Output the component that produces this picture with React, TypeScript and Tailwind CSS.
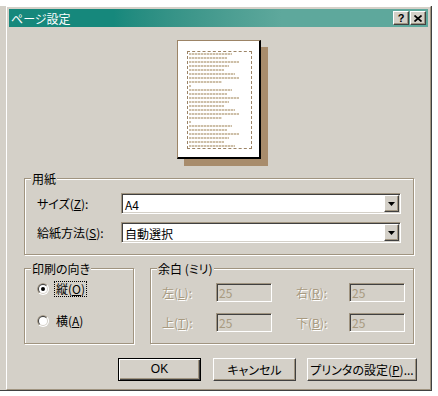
import React from "react";

// classic 3D edges, tan shadow colour of the scheme
const raised =
  "border border-t-white border-l-white border-r-[#404040] border-b-[#404040] shadow-[inset_-1px_-1px_0_#a09480]";
const sunken =
  "border border-t-[#a09480] border-l-[#a09480] border-r-white border-b-white shadow-[inset_1px_1px_0_#404040,inset_-1px_-1px_0_#d4d0c8]";
const disabledText = "text-[#a89a80] [text-shadow:1px_1px_0_#ffffff]";

const previewLines = [43, 38, 50, 40, 35, 46, 50, 33, 2, 43, 38, 50, 40, 35, 46, 50, 33, 2, 43, 38, 50, 40, 35, 46];

const GroupBox = ({
  label,
  className,
  children,
}: {
  label: string;
  className?: string;
  children?: React.ReactNode;
}) => (
  <div className={`relative border border-[#a09480] shadow-[inset_1px_1px_0_#ffffff,1px_1px_0_#ffffff] ${className}`}>
    <span className="absolute -top-[8px] left-[6px] bg-[#d4d0c8] px-[1px] text-[12px] leading-[15px] [font-feature-settings:'palt']">
      {label}
    </span>
    {children}
  </div>
);

const Radio = ({ checked }: { checked?: boolean }) => (
  <svg width="12" height="12" viewBox="0 0 12 12">
    <defs>
      <clipPath id="tl">
        <polygon points="0,0 12,0 0,12" />
      </clipPath>
    </defs>
    <circle cx="6" cy="6" r="6" fill="#ffffff" />
    <circle cx="6" cy="6" r="6" fill="#a09480" clipPath="url(#tl)" />
    <circle cx="6" cy="6" r="5" fill="#d4d0c8" />
    <circle cx="6" cy="6" r="5" fill="#404040" clipPath="url(#tl)" />
    <circle cx="6" cy="6" r="4" fill="#ffffff" />
    {checked && <circle cx="6" cy="6" r="2" fill="#000000" />}
  </svg>
);

const Combo = ({ value }: { value: string }) => (
  <div className={`flex h-[21px] w-[280px] bg-white ${sunken}`}>
    <div className="flex flex-1 items-center pl-[3px] pt-[1px] text-[12px] leading-[15px]">{value}</div>
    <div className={`mt-[1px] mr-[1px] flex h-[17px] w-[15px] items-center justify-center bg-[#d4d0c8] ${raised}`}>
      <svg width="7" height="4" viewBox="0 0 7 4">
        <polygon points="0,0 7,0 3.5,4" fill="#000" />
      </svg>
    </div>
  </div>
);

const MarginField = ({ label, mnemonic, gap }: { label: string; mnemonic: string; gap?: boolean }) => (
  <>
    <div className={`${gap ? "ml-[24px] w-[53px]" : "w-[54px]"} text-[12px] leading-[15px] ${disabledText}`}>
      {label}(<span className="underline">{mnemonic}</span>):
    </div>
    <div className={`flex h-[19px] w-[56px] items-center bg-[#d4d0c8] pl-[2px] text-[12px] leading-[15px] ${sunken}`}>
      <span className="text-[#a89a80]">25</span>
    </div>
  </>
);

export default function App() {
  return (
    <div className="h-[396px] w-[438px] bg-white font-['Noto_Sans_CJK_JP',sans-serif] text-black">
      <div className="mt-[6px] h-[385px] w-[432px] border-r border-b border-[#404040] bg-[#d4d0c8] pl-[6px]">
        <div className="h-full border border-t-white border-l-white border-r-[#a09480] border-b-[#a09480] p-[2px]">
          {/* title bar */}
          <div className="flex h-[18px] items-center bg-linear-to-r from-[#16887c] from-25% to-[#5ea89c] to-65% pl-[2px] pr-[2px]">
            <span className="flex-1 text-[12px] leading-[15px] text-white [font-feature-settings:'palt']">ページ設定</span>
            <div className={`flex h-[14px] w-[16px] items-center justify-center bg-[#d4d0c8] ${raised}`}>
              <span className="font-['Liberation_Sans',sans-serif] text-[11px] font-bold leading-[11px]">?</span>
            </div>
            <div className={`ml-[1px] flex h-[14px] w-[16px] items-center justify-center bg-[#d4d0c8] ${raised}`}>
              <svg width="8" height="7" viewBox="0 0 8 7">
                <path d="M0.5 0.5 L7.5 6.5 M7.5 0.5 L0.5 6.5" stroke="#000" strokeWidth="1.7" />
              </svg>
            </div>
          </div>

          {/* page preview */}
          <div className="ml-[168px] mt-[13px] h-[119px] w-[84px] border-t border-l border-[#9c8466] border-r-2 border-b-2 border-r-black border-b-black bg-white shadow-[7px_7px_0_#a88c6c]">
            <div className="ml-[9px] mt-[10px] h-[98px] w-[65px] border border-dashed border-[#9c8466] pl-[1px] pt-[1px]">
              {previewLines.map((w, i) => (
                <div
                  key={i}
                  className="mb-[2px] h-[2px] bg-[repeating-linear-gradient(90deg,#cdbfa8_0px,#cdbfa8_2px,#ebe4d8_2px,#ebe4d8_3px)]"
                  style={{ width: w }}
                />
              ))}
            </div>
          </div>

          {/* paper */}
          <GroupBox label="用紙" className="ml-[15px] mt-[19px] h-[77px] w-[390px] pl-[12px] pt-[14px]">
            <div className="flex items-center">
              <div className="w-[84px] text-[12px] leading-[15px] [font-feature-settings:'palt']">
                サイズ(<span className="underline">Z</span>):
              </div>
              <Combo value="A4" />
            </div>
            <div className="mt-[8px] flex items-center">
              <div className="w-[84px] text-[12px] leading-[15px]">
                給紙方法(<span className="underline">S</span>):
              </div>
              <Combo value="自動選択" />
            </div>
          </GroupBox>

          <div className="ml-[15px] mt-[13px] flex">
            {/* orientation */}
            <GroupBox label="印刷の向き" className="h-[76px] w-[110px] pl-[12px] pt-[12px]">
              <div className="flex h-[16px] items-center">
                <Radio checked />
                <span className="ml-[5px] border border-dotted border-black px-[1px] text-[12px] leading-[14px]">
                  縦(<span className="underline">O</span>)
                </span>
              </div>
              <div className="mt-[16px] flex h-[16px] items-center">
                <Radio />
                <span className="ml-[6px] px-[1px] text-[12px] leading-[14px]">
                  横(<span className="underline">A</span>)
                </span>
              </div>
            </GroupBox>

            {/* margins */}
            <GroupBox label="余白 (ミリ)" className="ml-[16px] h-[76px] w-[264px] pl-[11px] pt-[14px]">
              <div className="flex items-center">
                <MarginField label="左" mnemonic="L" />
                <MarginField label="右" mnemonic="R" gap />
              </div>
              <div className="mt-[11px] flex items-center">
                <MarginField label="上" mnemonic="T" />
                <MarginField label="下" mnemonic="B" gap />
              </div>
            </GroupBox>
          </div>

          {/* buttons */}
          <div className="ml-[109px] mt-[14px] flex text-[12px] leading-[15px]">
            <div className="flex h-[23px] w-[83px] items-center justify-center border border-black bg-[#d4d0c8] shadow-[inset_1px_1px_0_#ffffff,inset_-1px_-1px_0_#404040,inset_-2px_-2px_0_#a09480] font-['Liberation_Sans',sans-serif]">
              OK
            </div>
            <div className={`ml-[12px] flex h-[23px] w-[83px] items-center justify-center bg-[#d4d0c8] ${raised} [font-feature-settings:'palt']`}>
              キャンセル
            </div>
            <div className={`ml-[11px] flex h-[23px] w-[110px] items-center justify-center bg-[#d4d0c8] ${raised} [font-feature-settings:'palt']`}>
              プリンタの設定(<span className="underline">P</span>)...
            </div>
          </div>
        </div>
      </div>
    </div>
  );
}
